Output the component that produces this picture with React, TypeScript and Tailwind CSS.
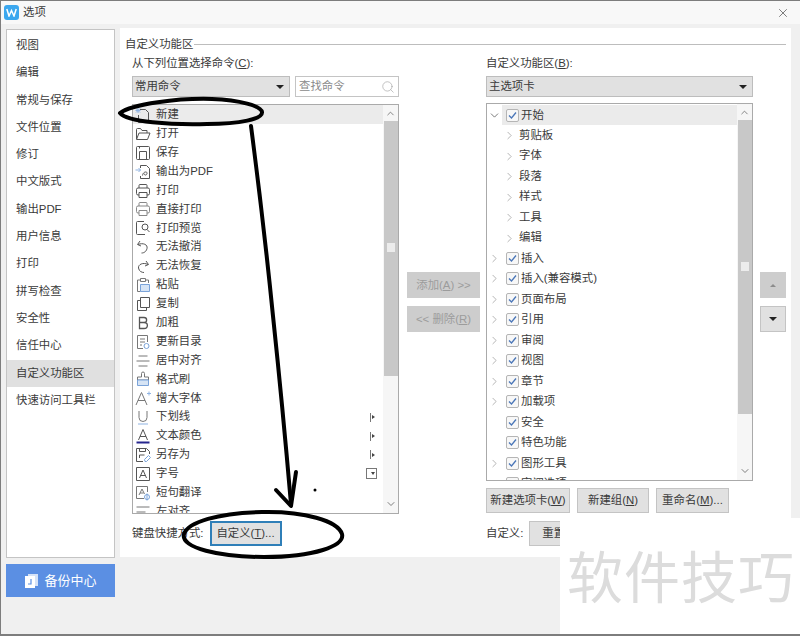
import React from 'react';
import { ChevronDown, ChevronRight, ChevronUp, Search, X } from 'lucide-react';

const FONT = '"Liberation Sans", "Noto Sans CJK SC", sans-serif';

const sideItems = [
  '视图',
  '编辑',
  '常规与保存',
  '文件位置',
  '修订',
  '中文版式',
  '输出PDF',
  '用户信息',
  '打印',
  '拼写检查',
  '安全性',
  '信任中心',
  '自定义功能区',
  '快速访问工具栏',
];

// small command glyphs, 16x16, thin gray outline
const glyphs: Record<string, React.ReactNode> = {
  new: (
    <>
      <path d="M5 2.500h5.500l3 3v10h-10V8" />
      <path d="M3 1v5M.5 3.500h5M1 1.500l4 4M5 1.500l-4 4" stroke="#8fb3e2" />
    </>
  ),
  open: <path d="M1.500 13V3.500q0-1 1-1h3l1.500 2h5v2.500M1.500 13.500l2.500-6.500h11l-2.500 6.500z" />,
  save: (
    <>
      <path d="M2.500 1.500h11q1 0 1 1v11q0 1-1 1h-11q-1 0-1-1v-11q0-1 1-1z" />
      <path d="M4.500 14.500V6.500h7v8M4.500 1.500v2" />
    </>
  ),
  pdf: (
    <>
      <path d="M5.500 4V1.500h6l3 3v10h-9V12" />
      <path d="M.5 6h5M3.500 4l2 2-2 2" stroke="#8fb3e2" />
      <path d="M7.500 11.500c.5-4 5-4.500 4.500-2s-3 1.500-3 0" />
    </>
  ),
  print: (
    <>
      <path d="M4 5V2.500q0-1 1-1h6q1 0 1 1V5M4 12H3q-1.500 0-1.500-1.500v-4Q1.500 5 3 5h10q1.500 0 1.500 1.500v4Q14.500 12 13 12h-1" />
      <path d="M4 9.500h8v5H4z" />
    </>
  ),
  printDirect: (
    <>
      <path d="M4 5V2.500q0-1 1-1h6q1 0 1 1V5M4 12H3q-1.500 0-1.500-1.500v-4Q1.500 5 3 5h10q1.500 0 1.500 1.500v4Q14.500 12 13 12h-1" stroke="#888" />
      <path d="M4 9.500h8v5H4z" stroke="#888" />
    </>
  ),
  preview: (
    <>
      <path d="M9 1.500H2.500q-1 0-1 1v11q0 1 1 1H10" />
      <circle cx="10" cy="7" r="3" />
      <path d="M12 9.500l2.500 2.500" />
    </>
  ),
  undo: <path d="M5 2L2.500 5.500 6 7M3 5.500c5-2 10 0 9 4s-4 4.500-5.500 4.500" />,
  redo: <path d="M11 3l2.500 3.500L10 8M13 6.500c-5-2.500-10 0-9.500 3.500s3.500 4.500 5.500 4.500" />,
  paste: (
    <>
      <path d="M5.500 3H2.500v11.500h3M10.500 3h3v3" stroke="#777" />
      <path d="M5.500 1.500h5v3h-5z" stroke="#777" />
      <path d="M5.500 7.500h9v7h-9z" fill="#d6e4f5" stroke="#7aa3d9" />
    </>
  ),
  copy: (
    <>
      <path d="M5.500 1.500h9v10h-9z" />
      <path d="M5.500 4.500h-3v10h9v-3" />
    </>
  ),
  bold: <path d="M4.500 2.500h4.500c3.500 0 3.500 5 0 5H4.500zM9 7.500c4.500 0 4.500 6 0 6H4.500v-6" strokeWidth="1.300" />,
  toc: (
    <>
      <path d="M8 14.500H2.500v-13h10V8" stroke="#777" />
      <path d="M5 5h5M5 8h5M5 11h2" stroke="#777" />
      <circle cx="11.500" cy="12" r="2.500" stroke="#7aa3d9" />
    </>
  ),
  center: <path d="M3.500 3h9M1.500 8h13M3.500 13h9" stroke="#777" />,
  brush: (
    <>
      <path d="M6.500 6V2.500a1.500 1.500 0 0 1 3 0V6h4v3h-11V6z" stroke="#777" />
      <path d="M2.500 9h11v5.500h-11z" fill="#d6e4f5" stroke="#7aa3d9" />
    </>
  ),
  grow: (
    <>
      <path d="M1 15L6.500 2.500 12 15M3 10.500h7" stroke="#777" />
      <path d="M12 3.500h4M14 1.500v4" stroke="#8fb3e2" />
    </>
  ),
  underline: (
    <>
      <path d="M4 2v6.500a4 4 0 0 0 8 0V2" stroke="#777" />
      <path d="M3 15h10" stroke="#8fb3e2" />
    </>
  ),
  color: (
    <>
      <path d="M3.500 12L8 1.500 12.500 12M5 8.500h6" />
      <path d="M1.500 14.500h13" stroke="#27278f" strokeWidth="2" />
    </>
  ),
  saveAs: (
    <>
      <path d="M8 14.500H1.500v-13h10l3 3V7" />
      <path d="M4.500 1.500v3h6v-3M4.500 11V8h5" />
      <path d="M10 14.500l-.5-2 4-4 2 2-4 4z" stroke="#7aa3d9" />
    </>
  ),
  size: (
    <>
      <path d="M1.500 1.500h13v13h-13z" />
      <path d="M4.500 12L8 4l3.500 8M5.500 9.500h5" />
    </>
  ),
  translate: (
    <>
      <path d="M9 13.500H1.500v-12h11V7" stroke="#777" />
      <path d="M4 10l3-6 2.500 5M5 8h3.500" stroke="#777" />
      <circle cx="12" cy="12" r="2.500" stroke="#7aa3d9" />
      <path d="M12 8.500v7" stroke="#7aa3d9" />
    </>
  ),
  left: <path d="M1.500 3h13M1.500 8h9M1.500 13h13" stroke="#777" />,
};

const Glyph = ({ name }: { name: string }) => (
  <svg width="16" height="16" viewBox="0 0 16 16" fill="none" stroke="#555" strokeWidth="1" className="shrink-0">
    {glyphs[name]}
  </svg>
);

type Command = { label: string; icon: string; marker?: 'sub' | 'box' };

const commands: Command[] = [
  { label: '新建', icon: 'new' },
  { label: '打开', icon: 'open' },
  { label: '保存', icon: 'save' },
  { label: '输出为PDF', icon: 'pdf' },
  { label: '打印', icon: 'print' },
  { label: '直接打印', icon: 'printDirect' },
  { label: '打印预览', icon: 'preview' },
  { label: '无法撤消', icon: 'undo' },
  { label: '无法恢复', icon: 'redo' },
  { label: '粘贴', icon: 'paste' },
  { label: '复制', icon: 'copy' },
  { label: '加粗', icon: 'bold' },
  { label: '更新目录', icon: 'toc' },
  { label: '居中对齐', icon: 'center' },
  { label: '格式刷', icon: 'brush' },
  { label: '增大字体', icon: 'grow' },
  { label: '下划线', icon: 'underline', marker: 'sub' },
  { label: '文本颜色', icon: 'color', marker: 'sub' },
  { label: '另存为', icon: 'saveAs', marker: 'sub' },
  { label: '字号', icon: 'size', marker: 'box' },
  { label: '短句翻译', icon: 'translate' },
  { label: '左对齐', icon: 'left' },
];

type TreeRow = { label: string; level: 0 | 1; expander?: 'open' | 'closed'; checked?: boolean };

const tabs: TreeRow[] = [
  { label: '开始', level: 0, expander: 'open', checked: true },
  { label: '剪贴板', level: 1, expander: 'closed' },
  { label: '字体', level: 1, expander: 'closed' },
  { label: '段落', level: 1, expander: 'closed' },
  { label: '样式', level: 1, expander: 'closed' },
  { label: '工具', level: 1, expander: 'closed' },
  { label: '编辑', level: 1, expander: 'closed' },
  { label: '插入', level: 0, expander: 'closed', checked: true },
  { label: '插入(兼容模式)', level: 0, expander: 'closed', checked: true },
  { label: '页面布局', level: 0, expander: 'closed', checked: true },
  { label: '引用', level: 0, expander: 'closed', checked: true },
  { label: '审阅', level: 0, expander: 'closed', checked: true },
  { label: '视图', level: 0, expander: 'closed', checked: true },
  { label: '章节', level: 0, expander: 'closed', checked: true },
  { label: '加载项', level: 0, expander: 'closed', checked: true },
  { label: '安全', level: 0, checked: true },
  { label: '特色功能', level: 0, checked: true },
  { label: '图形工具', level: 0, expander: 'closed', checked: true },
  { label: '审阅选项', level: 0, checked: false },
];

const Caret = ({ className = '' }: { className?: string }) => (
  <span className={`h-0 w-0 border-x-[4px] border-t-[4px] border-x-transparent border-t-[#222] ${className}`} />
);

const Select = ({ value, className = '' }: { value: string; className?: string }) => (
  <div className={`flex h-[21px] items-center justify-between border border-[#bdbdbd] bg-[#e1e1e1] pl-[2px] pr-[5px] ${className}`}>
    <span className="pt-[1px]">{value}</span>
    <Caret />
  </div>
);

const Scrollbar = ({ thumb, handleAt }: { thumb: string; handleAt: string }) => (
  <div className="relative flex w-[15px] shrink-0 flex-col items-center bg-[#f6f6f6]">
    <div className="flex h-[16px] w-full shrink-0 items-center justify-center">
      <ChevronUp size={11} strokeWidth={1.5} color="#555" />
    </div>
    <div className={`relative w-[14px] shrink-0 bg-[#c8c8c8] ${thumb}`}>
      <div className={`absolute left-[3px] h-[9px] w-[8px] bg-[#ececec] ${handleAt}`} />
    </div>
    <div className="flex-1" />
    <div className="flex h-[18px] w-full shrink-0 items-center justify-center">
      <ChevronDown size={12} strokeWidth={1.5} color="#555" />
    </div>
  </div>
);

const Btn = ({ children, className = '' }: { children: React.ReactNode; className?: string }) => (
  <div className={`flex h-[25px] items-center justify-center whitespace-nowrap border border-[#c4c4c4] bg-[#e1e1e1] pt-[1px] ${className}`}>
    {children}
  </div>
);

const Check = ({ on }: { on?: boolean }) => (
  <span className="flex h-[13px] w-[13px] shrink-0 items-center justify-center rounded-[2px] border border-[#b5b5b5] bg-[#f7f7f7]">
    {on && (
      <svg width="9" height="9" viewBox="0 0 9 9" fill="none" stroke="#4a76b8" strokeWidth="1.300">
        <path d="M1 4.500l2.500 2.500L8 1.500" />
      </svg>
    )}
  </span>
);

export default function App() {
  return (
    <div
      className="relative flex h-[636px] w-[800px] flex-col overflow-hidden border-b-2 border-l border-t border-[#7d7d7d] bg-[#f0f0f0] text-[11.400px] leading-none text-[#3a3a3a]"
      style={{ fontFamily: FONT }}>
      {/* title bar */}
      <div className="flex h-[23px] shrink-0 items-center bg-[#f8f8f8] pl-[3px] pr-[10px]">
        <div className="flex h-[15px] w-[15px] items-center justify-center rounded-[3px] bg-[#3ba7ee]">
          <svg width="11" height="9" viewBox="0 0 11 9" fill="none" stroke="#fff" strokeWidth="1.500">
            <path d="M.8 1l2.200 7 2.500-5.500L8 8l2.200-7" />
          </svg>
        </div>
        <span className="ml-[4px] pt-[1px]">选项</span>
        <X size={14} strokeWidth={1} color="#222" className="ml-auto" />
      </div>

      <div className="flex flex-1 pl-[5px] pt-[4px]">
        {/* left navigation */}
        <div className="flex w-[109px] shrink-0 flex-col pt-[1px]">
          <div className="h-[529px] border border-[#c4c4c4] bg-white pt-[2px]">
            {sideItems.map((item) => (
              <div
                key={item}
                className={`flex h-[27.300px] items-center pl-[9px] ${item === '自定义功能区' ? 'bg-[#e0e0e0]' : ''}`}>
                {item}
              </div>
            ))}
          </div>
          <div className="mt-[6px] flex h-[33px] items-center justify-center gap-[5px] bg-[#5b8fe3] text-[13px] text-white">
            <svg width="15" height="16" viewBox="0 0 15 16">
              <path d="M4 1h10v12H4z" fill="#d5e2f7" />
              <path d="M1 3h10v12H1z" fill="#fff" />
              <path d="M7 6v5H4" fill="none" stroke="#5b8fe3" strokeWidth="1.200" />
            </svg>
            备份中心
          </div>
        </div>

        {/* main panel */}
        <div className="ml-[5px] h-[529px] w-[671px] shrink-0 bg-white pl-[5px] pt-[8px]">
          <div className="flex h-[17px] items-center pr-[5px]">
            <span>自定义功能区</span>
            <div className="ml-[1px] h-px flex-1 bg-[#bdbdbd]" />
          </div>

          <div className="mt-[3px] flex pl-[7px]">
            {/* command source column */}
            <div className="w-[267px] shrink-0">
              <div className="flex h-[16px] items-center">
                从下列位置选择命令(<u>C</u>):
              </div>
              <div className="mt-[4px] flex justify-between">
                <Select value="常用命令" className="w-[158px]" />
                <div className="flex h-[21px] w-[104px] items-center justify-between border border-[#c4c4c4] pl-[3px] pr-[3px] pt-[1px] text-[#8a8a8a]">
                  查找命令
                  <Search size={14} strokeWidth={1} color="#999" />
                </div>
              </div>
              <div className="mt-[7px] flex h-[410px] overflow-hidden border border-[#aaa]">
                <div className="min-w-0 flex-1">
                  {commands.map((c, i) => (
                    <div
                      key={c.label}
                      className={`flex h-[18.900px] shrink-0 items-center pl-[2px] pt-[1px] ${i === 0 ? 'bg-[#ebebeb]' : ''}`}>
                      <Glyph name={c.icon} />
                      <span className="ml-[5px]">{c.label}</span>
                      {c.marker === 'sub' && (
                        <span className="ml-auto mr-[8px] flex items-center gap-[1px]">
                          <span className="h-[9px] w-px bg-[#777]" />
                          <span className="h-0 w-0 border-y-[2.500px] border-l-[3px] border-y-transparent border-l-[#444]" />
                        </span>
                      )}
                      {c.marker === 'box' && (
                        <span className="ml-auto mr-[6px] flex h-[11px] w-[11px] items-center justify-end border border-[#777] pr-[1px]">
                          <span className="h-0 w-0 border-x-[2px] border-t-[3px] border-x-transparent border-t-[#444]" />
                        </span>
                      )}
                    </div>
                  ))}
                </div>
                <Scrollbar thumb="h-[255px]" handleAt="top-[122px]" />
              </div>
              <div className="mt-[7px] flex items-center">
                <span>键盘快捷方式:</span>
                <Btn className="ml-[6px] w-[72px] border-2 !border-[#2f7fb8]">
                  自定义(<u>T</u>)...
                </Btn>
              </div>
            </div>

            {/* add / remove buttons */}
            <div className="ml-[8px] mt-[216px] w-[73px] shrink-0 text-[#9c9c9c]">
              <div className="flex h-[26px] items-center justify-center bg-[#cdcdcd] pt-[1px]">
                添加(<u>A</u>)&nbsp;&gt;&gt;
              </div>
              <div className="mt-[8px] flex h-[26px] items-center justify-center bg-[#cdcdcd] pt-[1px]">
                &lt;&lt;&nbsp;删除(<u>R</u>)
              </div>
            </div>

            {/* ribbon tree column */}
            <div className="ml-[6px] w-[267px] shrink-0">
              <div className="flex h-[16px] items-center">
                自定义功能区(<u>B</u>):
              </div>
              <Select value="主选项卡" className="mt-[4px]" />
              <div className="mt-[6px] flex h-[378px] overflow-hidden border border-[#aaa]">
                <div className="min-w-0 flex-1 pt-[1px]">
                  {tabs.map((row, i) => (
                    <div key={row.label} className="flex h-[20.480px] items-center">
                      <span className="flex w-[15px] shrink-0 justify-center">
                        {row.level === 0 && row.expander === 'open' && (
                          <ChevronDown size={13} strokeWidth={1.300} color="#444" />
                        )}
                        {row.level === 0 && row.expander === 'closed' && (
                          <ChevronRight size={13} strokeWidth={1} color="#777" />
                        )}
                      </span>
                      {row.level === 1 ? (
                        <>
                          <ChevronRight size={13} strokeWidth={1} color="#777" className="ml-[1px] shrink-0" />
                          <span className="ml-[3px]">{row.label}</span>
                        </>
                      ) : (
                        <div className={`flex h-full flex-1 items-center pl-[4px] ${i === 0 ? 'bg-[#ebebeb]' : ''}`}>
                          <Check on={row.checked} />
                          <span className="ml-[2px]">{row.label}</span>
                        </div>
                      )}
                    </div>
                  ))}
                </div>
                <Scrollbar thumb="h-[294px]" handleAt="top-[142px]" />
              </div>
              <div className="mt-[7px] flex gap-[7px]">
                <Btn className="w-[84px]">
                  新建选项卡(<u>W</u>)
                </Btn>
                <Btn className="w-[72px]">
                  新建组(<u>N</u>)
                </Btn>
                <Btn className="w-[73px]">
                  重命名(<u>M</u>)...
                </Btn>
              </div>
              <div className="mt-[8px] flex items-center">
                <span>自定义:</span>
                <Btn className="ml-[6px] w-[72px] !justify-start pl-[12px]">重置</Btn>
              </div>
            </div>

            {/* move up / down */}
            <div className="ml-[7px] mt-[216px] w-[26px] shrink-0">
              <div className="flex h-[26px] items-center justify-center bg-[#cdcdcd]">
                <span className="h-0 w-0 border-x-[3.500px] border-b-[3.500px] border-x-transparent border-b-[#8c8c8c]" />
              </div>
              <div className="mt-[8px] flex h-[26px] items-center justify-center border border-[#c4c4c4] bg-[#e1e1e1]">
                <Caret />
              </div>
            </div>
          </div>
        </div>
      </div>

      {/* watermark patch */}
      <div
        className="absolute left-[559px] top-[517px] h-[119px] w-[241px] bg-white pl-[7px] pt-[24px] text-[56px] leading-[64px] tracking-[1px] text-[#dcdcdc]"
        style={{ fontFamily: '"Noto Sans CJK SC", sans-serif' }}>
        软件技巧
      </div>

      {/* hand-drawn pen marks */}
      <svg className="pointer-events-none absolute left-[-1px] top-[-1px]" width="800" height="636" fill="none" stroke="#000" strokeLinecap="round" strokeLinejoin="round">
        <path
          d="M120 113c12-9 58-15 92-14 28 1 49 7 50 13 1 7-22 12-55 12-36 1-80-2-87-11z"
          strokeWidth="4"
        />
        <path d="M251 126c6 46 14 110 22 190 7 66 13 130 18 188" strokeWidth="4" />
        <path d="M276 490l15 16 5-34" strokeWidth="4" />
        <circle cx="315" cy="490" r="1.500" fill="#000" stroke="none" />
        <path
          d="M184 534c4-12 34-21 78-22 42-1 76 9 80 22 3 12-28 23-78 23-44 0-84-9-80-23z"
          strokeWidth="4"
        />
      </svg>
    </div>
  );
}
